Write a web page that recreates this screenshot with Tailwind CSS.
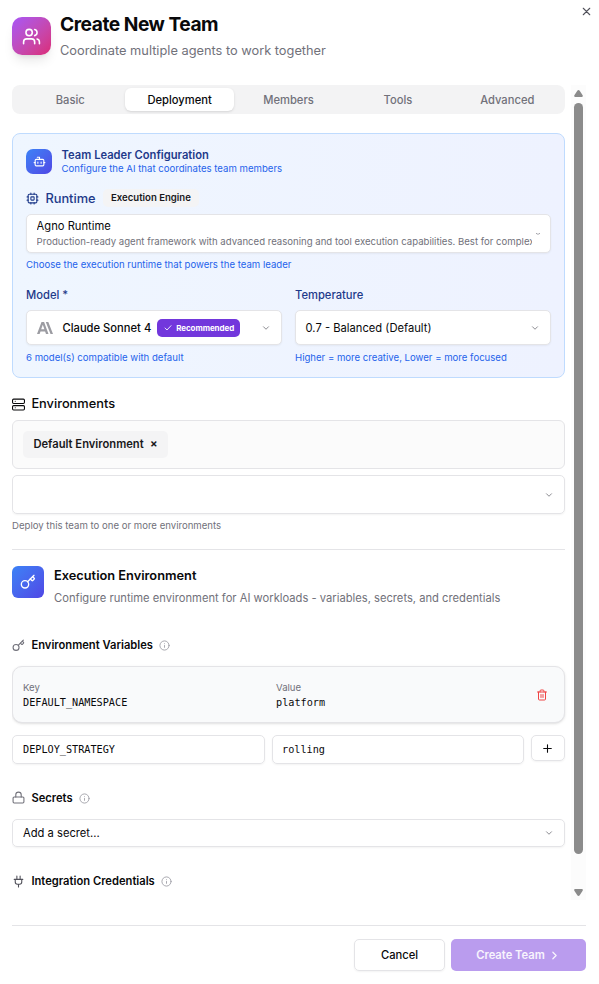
<!DOCTYPE html>
<html lang="en">
<head>
<meta charset="utf-8">
<title>Create New Team</title>
<script src="https://cdn.jsdelivr.net/npm/@tailwindcss/browser@4"></script>
</head>
<body class="w-[599px] h-[984px] overflow-hidden bg-white font-['Inter',sans-serif] text-[11.2px] leading-4 text-[#09090b]">
<svg class="hidden">
  <symbol id="chev" viewBox="0 0 24 24"><path d="m6 9 6 6 6-6"/></symbol>
  <symbol id="key" viewBox="0 0 24 24"><path d="m15.5 7.5 2.3 2.3a1 1 0 0 0 1.4 0l2.1-2.1a1 1 0 0 0 0-1.4L19 4"/><path d="m21 2-9.6 9.6"/><circle cx="7.5" cy="15.5" r="5.5"/></symbol>
  <symbol id="info" viewBox="0 0 24 24"><circle cx="12" cy="12" r="10"/><path d="M12 16v-4M12 8h.01"/></symbol>
</svg>
<main class="relative flex h-full flex-col pl-3 pr-[13px]">
  <button class="absolute right-[6.5px] top-[5px] text-[#52525b]"><svg class="size-[13px]" viewBox="0 0 24 24" fill="none" stroke="currentColor" stroke-width="2" stroke-linecap="round"><path d="M18 6 6 18M6 6l12 12"/></svg></button>

  <header class="flex h-[85px] shrink-0 gap-[9px]">
    <div class="mt-[17px] flex h-[38px] w-[39px] items-center justify-center rounded-[10px] bg-linear-to-br from-[#a855f7] to-[#db2777] text-white shadow-[0_8px_12px_-3px_rgba(0,0,0,0.1),0_3px_5px_-3px_rgba(0,0,0,0.1)]">
      <svg class="size-[19px]" viewBox="0 0 24 24" fill="none" stroke="currentColor" stroke-width="2" stroke-linecap="round" stroke-linejoin="round"><path d="M16 21v-2a4 4 0 0 0-4-4H6a4 4 0 0 0-4 4v2"/><circle cx="9" cy="7" r="4"/><path d="M22 21v-2a4 4 0 0 0-3-3.87M16 3.13a4 4 0 0 1 0 7.75"/></svg>
    </div>
    <div class="pt-[11px]">
      <h1 class="text-[19.2px] font-bold leading-[26px] tracking-[-0.48px]">Create New Team</h1>
      <p class="mt-[4px] text-[12.8px] leading-[19px] text-[#71717a]">Coordinate multiple agents to work together</p>
    </div>
  </header>

  <div class="flex h-[815px] shrink-0 justify-between overflow-hidden">
    <div class="flex w-[553px] flex-col">
      <nav class="grid h-[29px] shrink-0 grid-cols-5 rounded-lg bg-[#f3f3f4] p-[3px] font-medium text-[#71717a]">
        <span class="flex items-center justify-center pl-[1px]">Basic</span>
        <span class="flex items-center justify-center rounded-[6px] bg-white text-[#09090b] shadow-sm ml-[1px]">Deployment</span>
        <span class="flex items-center justify-center">Members</span>
        <span class="flex items-center justify-center">Tools</span>
        <span class="flex items-center justify-center">Advanced</span>
      </nav>

      <section class="mt-[19px] h-[245px] shrink-0 rounded-[8px] border border-[#bfdbfe] bg-linear-to-r from-[#eff6ff] to-[#eef2ff] px-[13px] text-[#1e3a8a]">
        <div class="flex h-[55px] items-center gap-[9.6px]">
          <div class="flex h-[25px] w-[26px] items-center justify-center rounded-[7px] bg-linear-to-br from-[#3b82f6] to-[#4f46e5] text-white">
            <svg class="size-[13px]" viewBox="0 0 24 24" fill="none" stroke="currentColor" stroke-width="2" stroke-linecap="round" stroke-linejoin="round"><path d="M12 8V4H8"/><rect width="16" height="12" x="4" y="8" rx="2"/><path d="M2 14h2M20 14h2M15 13v2M9 13v2"/></svg>
          </div>
          <div>
            <h2 class="font-semibold leading-[13px]">Team Leader Configuration</h2>
            <p class="text-[9.6px] leading-[13px] text-[#2563eb]">Configure the AI that coordinates team members</p>
          </div>
        </div>
        <div class="flex h-[18px] items-center">
          <svg class="size-[13px]" viewBox="0 0 24 24" fill="none" stroke="currentColor" stroke-width="2" stroke-linecap="round" stroke-linejoin="round"><rect x="4" y="4" width="16" height="16" rx="2"/><rect x="9" y="9" width="6" height="6" rx="1"/><path d="M15 2v2M15 20v2M2 15h2M2 9h2M20 15h2M20 9h2M9 2v2M9 20v2"/></svg>
          <span class="ml-[6.4px] pt-[1px] text-[12.8px] font-medium">Runtime</span>
          <span class="ml-[7.4px] flex h-[18px] items-center rounded-[5px] bg-[#f4f4f5] px-2 text-[9.6px] font-semibold text-[#18181b]">Execution Engine</span>
        </div>
        <div class="mt-[7px] flex h-[39px] items-center rounded-[5px] border border-[#e4e4e7] bg-white pl-[9.6px] pr-[9px] shadow-xs">
          <div class="w-[495.4px] overflow-hidden whitespace-nowrap">
            <div class="leading-[15px] text-[#09090b]">Agno Runtime</div>
            <div class="text-[9.6px] leading-[15px] text-[#71717a]">Production-ready agent framework with advanced reasoning and tool execution capabilities. Best for complex</div>
          </div>
          <svg class="ml-auto h-[5px] w-[6px] text-[#a1a1a8]" viewBox="0 0 6 5" fill="none" stroke="currentColor" stroke-width="1"><path d="M1 2.3 2.5 3.1h1L5 2.3"/></svg>
        </div>
        <p class="mt-[4px] text-[9.6px] text-[#2563eb]">Choose the execution runtime that powers the team leader</p>
        <div class="mt-[14px] grid grid-cols-2 gap-[13px]">
          <div>
            <h3 class="font-medium">Model *</h3>
            <div class="mt-[7px] flex h-[35px] items-center rounded-[5px] border border-[#e4e4e7] bg-white px-[10px] text-[#09090b] shadow-xs">
              <svg class="h-[12px] w-[16px]" viewBox="0 0 16 12" fill="#9c9ca2"><path fill-rule="evenodd" d="M4.5 0h2.6l4.4 12H9l-.9-2.6H3.5L2.6 12H0Zm-.3 7.3h3.2L5.8 2.8ZM8.8 0h2.5L16 12h-2.5Z"/></svg>
              <span class="ml-[9.5px] font-medium">Claude Sonnet 4</span>
              <span class="ml-[6px] flex h-[18px] items-center gap-[4px] rounded-[5px] bg-[#7237dc] pl-[7px] pr-[6px] text-[8px] font-bold text-white"><svg class="size-[8px]" viewBox="0 0 24 24" fill="none" stroke="currentColor" stroke-width="2.5" stroke-linecap="round"><path d="M21 5 9 18l-6-6"/></svg><span class="tracking-[-0.08px]">Recommended</span></span>
              <svg class="ml-auto size-[10px] text-[#75757c]" fill="none" stroke="currentColor" stroke-width="2" stroke-linecap="round"><use href="#chev"/></svg>
            </div>
            <p class="mt-[5px] text-[9.6px] text-[#2563eb]">6 model(s) compatible with default</p>
          </div>
          <div>
            <h3 class="font-medium">Temperature</h3>
            <div class="mt-[7px] flex h-[35px] items-center rounded-[5px] border border-[#e4e4e7] bg-white px-[9.6px] text-[#09090b] shadow-xs">
              <span>0.7 - Balanced (Default)</span>
              <svg class="ml-auto size-[10px] text-[#75757c]" fill="none" stroke="currentColor" stroke-width="2" stroke-linecap="round"><use href="#chev"/></svg>
            </div>
            <p class="mt-[5px] text-[9.6px] text-[#2563eb]">Higher = more creative, Lower = more focused</p>
          </div>
        </div>
      </section>

      <div class="mt-[17px] flex h-[18px] shrink-0 items-center gap-[6.4px] text-[12.8px] font-medium">
        <svg class="size-[13px]" viewBox="0 0 24 24" fill="none" stroke="currentColor" stroke-width="2" stroke-linecap="round" stroke-linejoin="round"><rect width="22" height="8" x="1" y="2" rx="2"/><rect width="22" height="8" x="1" y="14" rx="2"/><path d="M6 6h.01M6 18h.01"/></svg>
        <h2>Environments</h2>
      </div>
      <div class="mt-[7px] flex h-[49px] shrink-0 items-center rounded-[6px] border border-[#e4e4e7] bg-[#fbfbfb] px-[10px]">
        <span class="flex h-[27px] items-center rounded-[5px] bg-[#f4f4f5] px-[10.4px] pb-[1px] font-semibold text-[#18181b]">Default Environment<b class="ml-[6.4px] font-bold">×</b></span>
      </div>
      <div class="mt-[6px] flex h-[39px] shrink-0 items-center justify-end rounded-[5px] border border-[#e4e4e7] px-[10px] shadow-xs">
        <svg class="size-[10px] text-[#75757c]" fill="none" stroke="currentColor" stroke-width="2" stroke-linecap="round"><use href="#chev"/></svg>
      </div>
      <p class="mt-[4px] text-[9.6px] text-[#71717a]">Deploy this team to one or more environments</p>
      <hr class="mt-[15px] border-[#e4e4e7]">

      <div class="mt-[16px] flex h-[42px] shrink-0 gap-[10px]">
        <div class="flex size-[32px] items-center justify-center rounded-[6px] bg-linear-to-br from-[#3b82f6] to-[#4f46e5] text-white"><svg class="size-[16px]" fill="none" stroke="currentColor" stroke-width="2" stroke-linecap="round" stroke-linejoin="round"><use href="#key"/></svg></div>
        <div>
          <h2 class="text-[12.8px] font-semibold leading-[19px]">Execution Environment</h2>
          <p class="mt-[5px] text-[#71717a]">Configure runtime environment for AI workloads - variables, secrets, and credentials</p>
        </div>
      </div>

      <div class="mt-[29px] flex h-4 shrink-0 items-center">
        <svg class="size-[13px] text-[#71717a]" fill="none" stroke="currentColor" stroke-width="2" stroke-linecap="round" stroke-linejoin="round"><use href="#key"/></svg>
        <h3 class="ml-[6.4px] font-semibold">Environment Variables</h3>
        <svg class="ml-[6px] size-[11px] text-[#a1a1a9]" fill="none" stroke="currentColor" stroke-width="2" stroke-linecap="round"><use href="#info"/></svg>
      </div>
      <div class="mt-[13px] flex h-[57px] shrink-0 items-center rounded-[10px] border border-[#e4e4e7] bg-[#f9fafb] pl-[10px] pr-[16px] shadow-sm">
        <div class="w-[253px] pt-[2px]"><div class="text-[9.6px] leading-[15px] text-[#71717a]">Key</div><div class="font-['DejaVu_Sans_Mono',monospace] text-[10.2px]">DEFAULT_NAMESPACE</div></div>
        <div class="pt-[2px]"><div class="text-[9.6px] leading-[15px] text-[#71717a]">Value</div><div class="font-['DejaVu_Sans_Mono',monospace] text-[10.2px]">platform</div></div>
        <svg class="ml-auto size-[12px] text-[#ef4444]" viewBox="0 0 24 24" fill="none" stroke="currentColor" stroke-width="2" stroke-linecap="round" stroke-linejoin="round"><path d="M3 6h18M19 6v14a2 2 0 0 1-2 2H7a2 2 0 0 1-2-2V6M8 6V4a2 2 0 0 1 2-2h4a2 2 0 0 1 2 2v2M10 11v6M14 11v6"/></svg>
      </div>
      <div class="mt-[12px] flex shrink-0 items-start gap-[7px]">
        <div class="flex h-[29px] w-[253px] items-center rounded-[5px] border border-[#e4e4e7] px-[10px] font-['DejaVu_Sans_Mono',monospace] text-[10.2px] shadow-xs">DEPLOY_STRATEGY</div>
        <div class="flex h-[29px] w-[252px] items-center rounded-[5px] border border-[#e4e4e7] px-[9px] font-['DejaVu_Sans_Mono',monospace] text-[10.2px] shadow-xs">rolling</div>
        <button class="flex h-[26px] w-[34px] items-center justify-center rounded-[5px] border border-[#e4e4e7] pr-[1px] shadow-xs"><svg class="size-[13px]" viewBox="0 0 24 24" fill="none" stroke="currentColor" stroke-width="2" stroke-linecap="round"><path d="M5 12h14M12 5v14"/></svg></button>
      </div>

      <div class="mt-[26px] flex h-4 shrink-0 items-center">
        <svg class="mb-[1px] size-[13px] text-[#71717a]" viewBox="0 0 24 24" fill="none" stroke="currentColor" stroke-width="2" stroke-linecap="round" stroke-linejoin="round"><rect width="20" height="11" x="2" y="11" rx="2"/><path d="M7 11V7a5 5 0 0 1 10 0v4"/></svg>
        <h3 class="ml-[6.4px] font-semibold">Secrets</h3>
        <svg class="ml-[6.4px] size-[11px] text-[#a1a1a9]" fill="none" stroke="currentColor" stroke-width="2" stroke-linecap="round"><use href="#info"/></svg>
      </div>
      <div class="mt-[13px] flex h-[28px] shrink-0 items-center justify-between rounded-[5px] border border-[#e4e4e7] px-[10px] shadow-xs">
        <span>Add a secret...</span>
        <svg class="size-[10px] text-[#75757c]" fill="none" stroke="currentColor" stroke-width="2" stroke-linecap="round"><use href="#chev"/></svg>
      </div>
      <div class="mt-[26px] flex h-4 shrink-0 items-center">
        <svg class="size-[13px] text-[#52525b]" viewBox="0 0 24 24" fill="none" stroke="currentColor" stroke-width="2" stroke-linecap="round" stroke-linejoin="round"><path d="M12 22v-5M9 8V2M15 8V2M18 8v5a4 4 0 0 1-4 4h-4a4 4 0 0 1-4-4V8ZM4 8h16"/></svg>
        <h3 class="ml-[6.4px] font-semibold">Integration Credentials</h3>
        <svg class="ml-[6px] size-[11px] text-[#a1a1a9]" fill="none" stroke="currentColor" stroke-width="2" stroke-linecap="round"><use href="#info"/></svg>
      </div>
    </div>

    <div class="flex w-[15px] flex-col items-center bg-[#fcfcfc] text-[#8b8b8b]">
      <svg class="mt-[5px] h-[7px] w-[9px] shrink-0" viewBox="0 0 9 7" fill="currentColor"><path d="M4.5 0Q5.2 0 5.7.8L8.8 5.6Q9 7 8 7H1Q0 7 .2 5.6L3.3.8Q3.8 0 4.5 0"/></svg>
      <div class="mt-[6px] h-[751px] w-[9px] shrink-0 rounded-full bg-[#8b8b8b]"></div>
      <svg class="mt-[35px] h-[7px] w-[9px] shrink-0 rotate-180" viewBox="0 0 9 7" fill="currentColor"><path d="M4.5 0Q5.2 0 5.7.8L8.8 5.6Q9 7 8 7H1Q0 7 .2 5.6L3.3.8Q3.8 0 4.5 0"/></svg>
    </div>
  </div>

  <footer class="mt-[25px] flex justify-end gap-[6px] border-t border-[#e4e4e7] pt-[13px] font-semibold">
    <button class="h-[32px] w-[91px] rounded-[5px] border border-[#e4e4e7] font-medium shadow-xs">Cancel</button>
    <button class="flex h-[32px] w-[135px] items-center justify-center gap-[3px] rounded-[5px] bg-[#ba9cee] font-semibold text-white/90">Create Team<svg class="size-[13px]" viewBox="0 0 24 24" fill="none" stroke="currentColor" stroke-width="2.3" stroke-linecap="round" stroke-linejoin="round"><path d="m9 18 6-6-6-6"/></svg></button>
  </footer>
</main>
</body>
</html>
